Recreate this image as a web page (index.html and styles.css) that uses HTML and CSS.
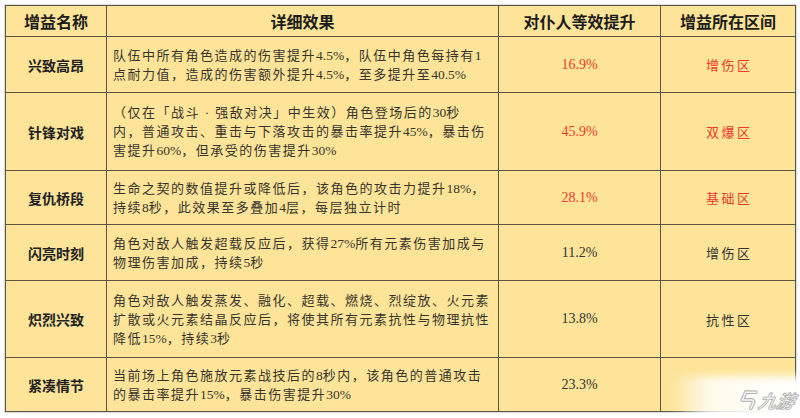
FILE: index.html
```html
<!DOCTYPE html>
<html lang="zh-CN">
<head>
<meta charset="utf-8">
<title>增益效果</title>
<link rel="stylesheet" href="styles.css">
</head>
<body>
<div class="page">
  <table class="buff">
    <colgroup><col class="c1"><col class="c2"><col class="c3"><col class="c4"></colgroup>
    <thead>
      <tr class="head"><th>增益名称</th><th>详细效果</th><th>对仆人等效提升</th><th>增益所在区间</th></tr>
    </thead>
    <tbody>
      <tr class="l2a">
        <td class="name">兴致高昂</td>
        <td class="desc">队伍中所有角色造成的伤害提升<span class="n">4.5%</span>，队伍中角色每持有<span class="n">1</span><br>点耐力值，造成的伤害额外提升<span class="n">4.5%</span>，至多提升至<span class="n">40.5%</span></td>
        <td class="val red">16.9%</td>
        <td class="zone red">增伤区</td>
      </tr>
      <tr class="l3a">
        <td class="name">针锋对戏</td>
        <td class="desc">（仅在「战斗 · 强敌对决」中生效）角色登场后的<span class="n">30</span>秒<br>内，普通攻击、重击与下落攻击的暴击率提升<span class="n">45%</span>，暴击伤<br>害提升<span class="n">60%</span>，但承受的伤害提升<span class="n">30%</span></td>
        <td class="val red">45.9%</td>
        <td class="zone red">双爆区</td>
      </tr>
      <tr class="l2b">
        <td class="name">复仇桥段</td>
        <td class="desc">生命之契的数值提升或降低后，该角色的攻击力提升<span class="n">18%</span>，<br>持续<span class="n">8</span>秒，此效果至多叠加<span class="n">4</span>层，每层独立计时</td>
        <td class="val red">28.1%</td>
        <td class="zone red">基础区</td>
      </tr>
      <tr class="l2a">
        <td class="name">闪亮时刻</td>
        <td class="desc">角色对敌人触发超载反应后，获得<span class="n">27%</span>所有元素伤害加成与<br>物理伤害加成，持续<span class="n">5</span>秒</td>
        <td class="val">11.2%</td>
        <td class="zone">增伤区</td>
      </tr>
      <tr class="l3b">
        <td class="name">炽烈兴致</td>
        <td class="desc">角色对敌人触发蒸发、融化、超载、燃烧、烈绽放、火元素<br>扩散或火元素结晶反应后，将使其所有元素抗性与物理抗性<br>降低<span class="n">15%</span>，持续<span class="n">3</span>秒</td>
        <td class="val">13.8%</td>
        <td class="zone">抗性区</td>
      </tr>
      <tr class="l2b">
        <td class="name">紧凑情节</td>
        <td class="desc">当前场上角色施放元素战技后的<span class="n">8</span>秒内，该角色的普通攻击<br>的暴击率提升<span class="n">15%</span>，暴击伤害提升<span class="n">30%</span></td>
        <td class="val">23.3%</td>
        <td class="zone"></td>
      </tr>
    </tbody>
  </table>
  <div class="wm">
    <div class="wm-glow"></div>
    <div class="wm-mark">
      <svg class="wm-logo" width="20" height="20" viewBox="0 0 18 18">
        <path d="M7 2 L16 2 M7 2 L4 9 L12 9 Q15 9 13.5 12.5 L11.5 16.5" fill="none" stroke="#b5b5b5" stroke-width="3.4" stroke-linecap="round" stroke-linejoin="round"/>
        <path d="M7 2 L16 2 M7 2 L4 9 L12 9 Q15 9 13.5 12.5 L11.5 16.5" fill="none" stroke="#f6f6f6" stroke-width="1.4" stroke-linecap="round" stroke-linejoin="round"/>
      </svg>
      <span class="wm-text">九游</span>
    </div>
  </div>
</div>
</body>
</html>
```
FILE: styles.css
```css
body {
  margin: 0;
  background: #ffffff;
}

.page {
  position: relative;
  width: 800px;
  height: 418px;
  padding: 5px 0 0 5px;
  box-sizing: border-box;
  overflow: hidden;
}

.buff {
  border-collapse: collapse;
  table-layout: fixed;
  width: 790px;
  background: #fde498;
  box-shadow: 0 0 1px 1px rgba(120, 120, 120, 0.25);
}

.c1 { width: 101px; }
.c2 { width: 392px; }
.c3 { width: 162px; }
.c4 { width: 135px; }

.buff th,
.buff td {
  border: 1px solid #5b5443;
  padding: 0;
  vertical-align: middle;
}

.head { height: 31px; }
.l2a { height: 56px; }
.l2b { height: 54px; }
.l3a { height: 78px; }
.l3b { height: 77px; }

.buff th {
  font-family: "Noto Sans CJK SC", "Noto Sans", sans-serif;
  font-weight: 700;
  font-size: 16px;
  color: #1c1c1c;
  text-align: center;
  line-height: 20px;
}

.name {
  font-family: "Noto Sans CJK SC", "Noto Sans", sans-serif;
  font-weight: 700;
  font-size: 14px;
  color: #222;
  text-align: center;
}

.desc {
  font-family: "Liberation Serif", "Noto Sans CJK SC", serif;
  font-size: 13px;
  line-height: 19px;
  letter-spacing: 1.5px;
  color: #38342d;
  white-space: nowrap;
  overflow: hidden;
  padding-left: 6px !important;
}

.desc .n {
  letter-spacing: 0;
  font-size: 13.5px;
}

.val {
  font-family: "Liberation Serif", serif;
  font-size: 14px;
  color: #333;
  text-align: center;
}

.zone {
  font-family: "Liberation Serif", "Noto Sans CJK SC", serif;
  font-size: 13px;
  letter-spacing: 2.5px;
  text-indent: 2.5px;
  color: #333;
  text-align: center;
}

.red {
  color: #ea3a2c;
}

.wm {
  position: absolute;
  right: 0;
  bottom: 0;
  width: 130px;
  height: 44px;
}

.wm-glow {
  position: absolute;
  left: 0;
  top: 2px;
  right: -10px;
  bottom: -10px;
  background:
    linear-gradient(90deg, rgba(255,255,255,0) 0%, rgba(255,255,255,0.8) 28%, rgba(255,255,255,0.95) 65%, #ffffff 100%);
  filter: blur(4px);
}

.wm-mark {
  position: relative;
  display: flex;
  align-items: center;
  justify-content: flex-end;
  gap: 1px;
  height: 100%;
  padding: 8px 5px 0 0;
  box-sizing: border-box;
}

.wm-text {
  font-family: "Noto Sans CJK SC", sans-serif;
  font-weight: 700;
  font-style: italic;
  font-size: 18px;
  line-height: 22px;
  color: #f3f3f3;
  -webkit-text-stroke: 0.8px #aeaeae;
  transform: skewX(-12deg);
}
```
